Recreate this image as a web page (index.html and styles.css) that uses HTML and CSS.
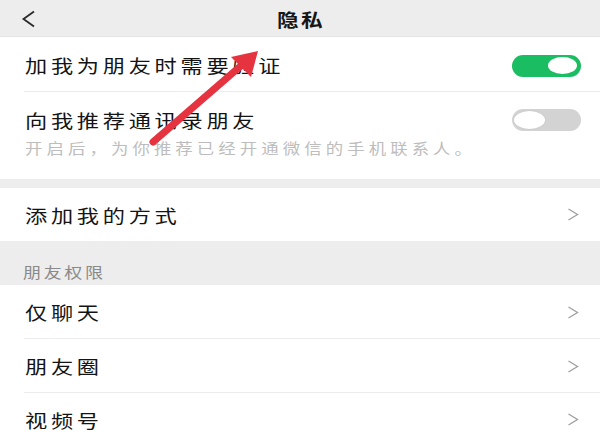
FILE: index.html
```html
<!DOCTYPE html>
<html lang="zh-CN">
<head>
<meta charset="utf-8">
<title>隐私</title>
<link rel="stylesheet" href="styles.css">
</head>
<body>
<div class="page">
  <header class="nav">
    <div class="nav-left">
      <svg class="back" width="16" height="18" viewBox="0 0 16 18"><polyline points="13,1.5 2.5,9 13,16.5" fill="none" stroke="#2a2a2a" stroke-width="1.8" stroke-linejoin="miter"/></svg>
    </div>
    <div class="nav-title"><span class="title">隐私</span></div>
    <div class="nav-right"></div>
  </header>

  <section class="group">
    <div class="row row-first">
      <span class="t">加我为朋友时需要验证</span>
      <div class="switch on"><div class="knob"></div></div>
    </div>
    <div class="row row-hint">
      <div class="row-main">
        <span class="t">向我推荐通讯录朋友</span>
        <div class="switch off"><div class="knob"></div></div>
      </div>
      <div class="hint"><span class="h">开启后，为你推荐已经开通微信的手机联系人。</span></div>
    </div>
  </section>

  <section class="group gap">
    <div class="row row-link">
      <span class="t">添加我的方式</span>
      <svg class="chev" width="12" height="13" viewBox="0 0 12 13"><polyline points="1.5,1 10.5,6.5 1.5,12" fill="none" stroke="#9e9e9e" stroke-width="1.3"/></svg>
    </div>
  </section>

  <div class="section-label"><span class="s">朋友权限</span></div>

  <section class="group">
    <div class="row row-link bordered">
      <span class="t">仅聊天</span>
      <svg class="chev" width="12" height="13" viewBox="0 0 12 13"><polyline points="1.5,1 10.5,6.5 1.5,12" fill="none" stroke="#9e9e9e" stroke-width="1.3"/></svg>
    </div>
    <div class="row row-link bordered">
      <span class="t">朋友圈</span>
      <svg class="chev" width="12" height="13" viewBox="0 0 12 13"><polyline points="1.5,1 10.5,6.5 1.5,12" fill="none" stroke="#9e9e9e" stroke-width="1.3"/></svg>
    </div>
    <div class="row row-link">
      <span class="t">视频号</span>
      <svg class="chev" width="12" height="13" viewBox="0 0 12 13"><polyline points="1.5,1 10.5,6.5 1.5,12" fill="none" stroke="#9e9e9e" stroke-width="1.3"/></svg>
    </div>
  </section>

  <svg class="annotation" width="600" height="444" viewBox="0 0 600 444">
    <line x1="153" y1="142" x2="243" y2="64" stroke="#e5333f" stroke-width="7" stroke-linecap="round"/>
    <polygon points="258,51 231,57 251,77" fill="#e5333f"/>
  </svg>
</div>
</body>
</html>
```

FILE: styles.css
```css
* { box-sizing: border-box; }
html, body { margin: 0; padding: 0; }
body {
  width: 600px;
  height: 444px;
  overflow: hidden;
  background: #ededed;
  font-family: "Noto Sans CJK SC", "Noto Sans", sans-serif;
  color: #1b1b1b;
}
.page { position: relative; width: 600px; height: 444px; overflow: hidden; }

.nav {
  height: 37px;
  display: grid;
  grid-template-columns: 1fr auto 1fr;
  align-items: center;
  background: #ededed;
  border-bottom: 1px solid #e4e4e4;
}
.nav-left { padding-left: 21px; display: flex; align-items: center; padding-top: 1px; }
.back { display: block; }
.nav-title { display: flex; justify-content: center; }
.title {
  display: inline-block;
  font-size: 18px;
  font-weight: 700;
  letter-spacing: 2px;
  transform: scaleX(1.2);
  color: #161616;
  line-height: 1;
  margin-right: -2px;
  padding-top: 1px;
}

.group { background: #fff; }
.group.gap { margin-top: 9px; }

.row {
  display: flex;
  align-items: center;
  justify-content: space-between;
  padding: 0 19px 0 25px;
}
.t {
  display: inline-block;
  font-size: 18.5px;
  line-height: 1;
  letter-spacing: 3.1px;
  transform: scaleX(1.2);
  transform-origin: left center;
  color: #141414;
}

.row-first {
  height: 55px;
  padding-top: 2px;
  position: relative;
}
.row-first::after {
  content: "";
  position: absolute;
  left: 24px; right: 0; bottom: 0;
  height: 1px;
  background: #ececec;
}

.row-hint {
  display: block;
  height: 87px;
  padding-top: 16px;
}
.row-main {
  display: flex;
  align-items: center;
  justify-content: space-between;
  height: 24px;
}
.hint { margin-top: 7px; line-height: 1; }
.h {
  display: inline-block;
  font-size: 14.5px;
  letter-spacing: 3.4px;
  transform: scaleX(1.2);
  transform-origin: left center;
  color: #bdbdbd;
}

.switch {
  width: 69px;
  height: 22px;
  border-radius: 11px;
  position: relative;
  flex: none;
}
.switch.on { background: #1bbd62; }
.switch.off { background: #d3d3d3; }
.switch .knob {
  position: absolute;
  top: 2.5px;
  width: 29px;
  height: 17px;
  border-radius: 50%;
  background: #fff;
}
.switch.on .knob { right: 4px; }
.switch.off .knob { left: 1px; top: 1px; width: 33px; height: 20px; border: 1.5px solid #cdcdcd; }

.row-link { height: 53px; padding-right: 21px; }
.row-link .t { margin-top: 1px; }
.chev { display: block; flex: none; }

.bordered {
  height: 54px;
  position: relative;
}
.bordered::after {
  content: "";
  position: absolute;
  left: 24px; right: 0; bottom: 0;
  height: 1px;
  background: #ececec;
}

.section-label {
  height: 44px;
  padding: 22px 0 0 23px;
  line-height: 1;
}
.s {
  display: inline-block;
  font-size: 15px;
  letter-spacing: 2.2px;
  transform: scaleX(1.2);
  transform-origin: left center;
  color: #8a8a8a;
}

.annotation {
  position: absolute;
  left: 0;
  top: 0;
  pointer-events: none;
}
```
